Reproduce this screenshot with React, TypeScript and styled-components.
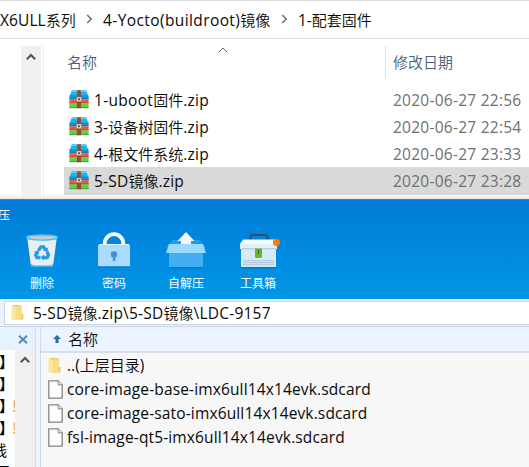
import React from 'react';
import styled, { createGlobalStyle } from 'styled-components';

const GlobalStyle = createGlobalStyle`
  * { box-sizing: border-box; }
  html, body { margin: 0; padding: 0; overflow: hidden; background: #fff; }
  svg { display: block; flex: none; }
`;

const Screen = styled.div`
  width: 529px;
  height: 467px;
  overflow: hidden;
  display: flex;
  flex-direction: column;
  background: #fff;
  font-family: "Open Sans", "Noto Sans CJK SC", sans-serif;
  font-size: 15.5px;
  color: #0a0a0a;
`;

/* Latin and CJK runs are sized separately so both share the same optical height. */
const Line = styled.span<{ $ls?: number }>`
  display: flex;
  align-items: baseline;
  height: 20px;
  line-height: 20px;
  white-space: pre;
  letter-spacing: ${(p) => p.$ls ?? 0}px;
`;
const Cjk = styled.span`
  font-family: "Noto Sans CJK SC", sans-serif;
  font-size: 15px;
  font-weight: 350;
  letter-spacing: 0;
`;

function Text({ children, ls }: { children: string; ls?: number }) {
  const runs = children.split(/([\u3000-\u9fff]+)/).filter(Boolean);
  return (
    <Line $ls={ls}>
      {runs.map((r, i) => (/[\u3000-\u9fff]/.test(r) ? <Cjk key={i}>{r}</Cjk> : <span key={i}>{r}</span>))}
    </Line>
  );
}

const Breadcrumb = styled.nav`
  height: 39px;
  flex: none;
  display: flex;
  align-items: center;
  border-top: 1px solid #d9d9d9;
  border-bottom: 1px solid #d9d9d9;
`;
const Crumb = styled.div<{ $w: number }>`
  width: ${(p) => p.$w}px;
  flex: none;
`;
const Separator = styled.div<{ $w: number }>`
  width: ${(p) => p.$w}px;
  padding: 0 0 2px 10px;
`;

const Explorer = styled.section`
  height: 160px;
  flex: none;
  display: flex;
  overflow: hidden;
  position: relative;
`;
const ExplorerScroll = styled.div`
  width: 20px;
  margin: 7px 2px 0 21px;
  padding: 7px 0 0 5px;
  background: #f0f0f0;
`;
const Files = styled.div`
  flex: 1;
  border-left: 1px solid #f0f0f0;
  margin-top: 7px;
`;
const FileHeader = styled.div`
  height: 40px;
  padding-left: 23px;
  display: flex;
  color: #4c607a;
`;
const NameHeader = styled.div`
  width: 319px;
  height: 32px;
  padding-top: 6px;
  display: flex;
  border-right: 1px solid #e2e2e2;
`;
const SortMark = styled.div`
  margin: -5px 0 0 121px;
`;
const DateHeader = styled.div`
  padding: 6px 0 0 7px;
`;
const FileRow = styled.div<{ $selected?: boolean }>`
  height: ${(p) => (p.$selected ? 28 : 27)}px;
  margin-left: 20px;
  padding: 0 0 1px 5px;
  display: flex;
  align-items: center;
  background: ${(p) => (p.$selected ? '#d9d9d9' : 'transparent')};
`;
const FileName = styled.div`
  width: 299px;
  margin-left: 5px;
  padding-top: 1px;
`;
const FileDate = styled.div`
  color: #707070;
  padding-top: 1px;
`;
const WindowShadow = styled.div`
  position: absolute;
  inset: auto 0 0 0;
  height: 4px;
  background: linear-gradient(rgba(246, 246, 246, 0.8), rgba(226, 226, 226, 0.8));
`;

const Toolbar = styled.section`
  height: 100px;
  flex: none;
  border-top: 1px solid #0b95dc;
  background: linear-gradient(#007bd6, #0097e8);
  color: #fff;
`;
const MenuTail = styled.div`
  height: 32px;
  padding-top: 5px;
  margin-left: -2px;
  font: 12px/20px "Noto Sans CJK SC", sans-serif;
`;
const Tools = styled.div`
  display: flex;
  padding-left: 6px;
`;
const Tool = styled.div`
  width: 72px;
  display: flex;
  flex-direction: column;
  align-items: center;
  font: 12px/18px "Noto Sans CJK SC", sans-serif;
`;
const ToolLabel = styled.span`
  margin-top: 2px;
`;

const AddressBar = styled.div`
  height: 28px;
  flex: none;
  padding: 2px 0 2px 4px;
  background: #e8f3fd;
  border-bottom: 1px solid #ccd6e2;
`;
const AddressField = styled.div`
  height: 24px;
  display: flex;
  align-items: center;
  gap: 9px;
  padding: 0 0 1px 6px;
  background: #fff;
  border: 1px solid #c9d5e5;
  border-right: 0;
`;

const Archive = styled.section`
  flex: 1;
  display: flex;
  min-height: 0;
`;
const TreePane = styled.aside`
  width: 35px;
  display: flex;
  flex-direction: column;
`;
const TreeHeader = styled.div`
  height: 23px;
  flex: none;
  padding: 8px 0 0 18px;
  background: #e6f2fe;
`;
const TreeBody = styled.div`
  flex: 1;
  display: flex;
  overflow: hidden;
`;
const TreeList = styled.div`
  width: 15px;
  padding-top: 1px;
  overflow: hidden;
`;
const TreeRow = styled.div<{ $shift: number; $bold?: boolean }>`
  height: 22px;
  display: flex;
  align-items: center;
  margin-left: ${(p) => p.$shift}px;
  font: ${(p) => (p.$bold ? 700 : 400)} 15px/22px "Noto Sans CJK SC", sans-serif;
  white-space: nowrap;
`;
const Warn = styled.span`
  color: #e5a93a;
  font-weight: 400;
  margin-left: -2px;
`;
const TreeScroll = styled.div`
  flex: 1;
  padding: 6px 0 0 5px;
  background: #f0f0f0;
`;
const Splitter = styled.div`
  width: 6px;
  background: #edf5fe;
  border-left: 1px solid #d5dee8;
  border-right: 1px solid #d0dae4;
`;
const Listing = styled.div`
  flex: 1;
  background: #f7f7f7;
`;
const ListHeader = styled.div`
  height: 26px;
  display: flex;
  align-items: center;
  gap: 7px;
  padding-left: 12px;
  background: #ecf5ff;
  border-bottom: 2px solid #d6e0ea;
`;
const Entry = styled.div`
  height: 24px;
  display: flex;
  align-items: center;
`;
const EntryIcon = styled.div`
  width: 26px;
  padding-left: 7px;
`;

const Chevron = () => (
  <svg width="7" height="10" viewBox="0 0 7 10">
    <path d="M1.2 1 L5.2 5 L1.2 9" fill="none" stroke="#777" strokeWidth="1.7" />
  </svg>
);
const ScrollUp = () => (
  <svg width="10" height="8" viewBox="0 0 10 8">
    <path d="M.8 6.3 L5 2 L9.2 6.3" fill="none" stroke="#555" strokeWidth="2.1" />
  </svg>
);
const ArchiveIcon = () => (
  <svg width="20" height="19" viewBox="0 0 20 19">
    <path d="M3 .2h14l2.600 6.300H.4z" fill="#1fb2ec" />
    <path d="M3 .2h14l.8 1.800H2.200z" fill="#59d0f5" />
    <path d="M.4 5.500h19.200v3.700H.4z" fill="#1490d0" />
    <path d="M.4 8.500h19.200v.8H.4z" fill="#0a6da6" />
    <path d="M.4 9.300h19.200v4H.4z" fill="#e95a3a" />
    <path d="M.4 12.500h19.200v.9H.4z" fill="#b8402c" />
    <path d="M.4 13.400h19.200v4.700H.4z" fill="#61cf47" />
    <path d="M.4 17.200h19.200v.9H.4z" fill="#38a233" />
    <path d="M8.200.2h3.600l.4 18h-4.400z" fill="#984d28" />
    <rect x="7.600" y="7" width="4.800" height="4.400" rx="1" fill="#d9cfc4" />
    <rect x="9" y="8.300" width="2" height="1.800" fill="#715043" />
  </svg>
);
const FolderIcon = () => (
  <svg width="13" height="17" viewBox="0 0 13 17">
    <path d="M2 1h8.5v9h1.8v5.5H2z" fill="#efc65c" />
    <path d="M4.5 2.5 10.5 1v14l-6 .5z" fill="#f8dc86" />
    <path d="M.5 1.2 4.8 3v13.6L.5 15z" fill="#fbe6a2" />
  </svg>
);
const PageIcon = () => (
  <svg width="15" height="19" viewBox="0 0 15 19">
    <path d="M.8.8h9.4l4 4v13.4H.8z" fill="#fdfdfd" stroke="#858585" strokeWidth="1.3" />
    <path d="M10.2.8v4h4" fill="#eee" stroke="#858585" />
  </svg>
);
const TrashIcon = () => (
  <svg width="34" height="40" viewBox="0 1 34 40">
    <path d="M2 5h30l-3.7 28.5Q28 36 25 36H9Q6 36 5.700 33.500z" fill="#e9eef2" />
    <path d="M5.500 32Q6 36 9 36h16q3 0 3.500-4Q27 34.500 24 34.500H10Q7 34.500 5.500 32z" fill="#39b3ee" />
    <ellipse cx="17" cy="6.500" rx="15.500" ry="2.600" fill="#bccbd5" stroke="#3cc0f6" strokeWidth="1.400" />
    <g fill="none" stroke="#259de0" strokeWidth="3.300">
      <path d="M13.500 19.500 16 15.800h2.500l2 3" />
      <path d="M22 20.500l1.500 3.500-1.300 2.500H18" />
      <path d="M15.500 26.500h-3.600l-1.300-2.500 1.500-2.500" />
    </g>
    <g fill="#259de0">
      <path d="M18 19.500l4.800-3v4.500z" />
      <path d="M19 23.500v6l-3.500-3z" />
      <path d="M9 21l4.500-2 .5 4.500z" />
    </g>
  </svg>
);
const LockIcon = () => (
  <svg width="34" height="40" viewBox="0 0 34 40">
    <path d="M7.800 14v-2.700a9.200 9.200 0 0 1 18.400 0v2.700" fill="none" stroke="#fff" strokeWidth="3.800" />
    <path d="M2 12h30v2H2z" fill="#e3f4ff" />
    <path d="M1 13h32v21.500H1z" fill="#a9dcff" />
    <path d="M1 34.500h32v1H1z" fill="#0874bb" />
    <circle cx="17" cy="22.500" r="3.200" fill="#458fd8" />
    <path d="M15.900 23.500h2.400V29h-2.400z" fill="#458fd8" />
  </svg>
);
const ExtractIcon = () => (
  <svg width="44" height="40" viewBox="0 2 44 40">
    <path d="M8 10h28l6 8-4-.5V17H6l-4 1z" fill="#249be5" />
    <path d="M22 2 30.500 11H27v4H17v-4h-3.500z" fill="#f0f8ff" />
    <path d="M5 22h34v15H5z" fill="#43aef3" />
    <path d="M5 14h34l3 9H2z" fill="#9bdaff" />
    <path d="M5 37h34v1.200H5z" fill="#0874bb" />
  </svg>
);
const ToolboxIcon = () => (
  <svg width="38" height="40" viewBox="0 2 38 40" overflow="visible">
    <path d="M11.500 11V7q0-2 2-2h13q2 0 2 2v4" fill="none" stroke="#3e4c5e" strokeWidth="2.200" />
    <path d="M4 9.500h31.500L38 14v4.500H1V14z" fill="#f4fafc" />
    <path d="M1 14h37v5H1z" fill="#e2eff6" />
    <path d="M2 19h35v18H2z" fill="#d9eaf7" />
    <path d="M2 18.300h35v1H2zM4 30.300h31v1H4zM4 32.300h31v1H4zM4 34.300h31v1H4z" fill="#a9c5d8" />
    <path d="M2 37h35v1.200H2z" fill="#0874bb" />
    <path d="M16 18.500h7V27l-1 1h-5l-1-1z" fill="#65b52f" />
    <path d="M19 20h1v4h-1z" fill="#2f6c1d" />
    <circle cx="37.400" cy="12.500" r="3.500" fill="#ff7b09" />
  </svg>
);

const files = [
  { name: '1-uboot固件.zip', date: '2020-06-27 22:56', ls: 0.3 },
  { name: '3-设备树固件.zip', date: '2020-06-27 22:54', ls: 0.2 },
  { name: '4-根文件系统.zip', date: '2020-06-27 23:33', ls: 0.2 },
  { name: '5-SD镜像.zip', date: '2020-06-27 23:28', selected: true, ls: 0.2 },
];
const tools = [
  { label: '删除', icon: <TrashIcon /> },
  { label: '密码', icon: <LockIcon /> },
  { label: '自解压', icon: <ExtractIcon /> },
  { label: '工具箱', icon: <ToolboxIcon /> },
];
const entries = [
  'core-image-base-imx6ull14x14evk.sdcard',
  'core-image-sato-imx6ull14x14evk.sdcard',
  'fsl-image-qt5-imx6ull14x14evk.sdcard',
];
const tree = [
  { text: '】', shift: -1, bold: true },
  { text: '】', shift: -1, bold: true },
  { text: '】', shift: -1, bold: true, warn: true },
  { text: '】', shift: -1, bold: true, warn: true },
  { text: '线', shift: -8 },
  { text: '回', shift: -5 },
];

export default function App() {
  return (
    <Screen>
      <GlobalStyle />
      <Breadcrumb>
        <Crumb $w={76}><Text ls={0.1}>X6ULL系列</Text></Crumb>
        <Separator $w={27}><Chevron /></Separator>
        <Crumb $w={168}><Text ls={0.4}>4-Yocto(buildroot)镜像</Text></Crumb>
        <Separator $w={27}><Chevron /></Separator>
        <Crumb $w={80}><Text>1-配套固件</Text></Crumb>
      </Breadcrumb>
      <Explorer>
        <ExplorerScroll><ScrollUp /></ExplorerScroll>
        <Files>
          <FileHeader>
            <NameHeader>
              <Text>名称</Text>
              <SortMark>
                <svg width="10" height="6" viewBox="0 0 10 6">
                  <path d="M.7 5.300 5 1l4.300 4.300" fill="none" stroke="#666" />
                </svg>
              </SortMark>
            </NameHeader>
            <DateHeader><Text>修改日期</Text></DateHeader>
          </FileHeader>
          {files.map((f) => (
            <FileRow key={f.name} $selected={f.selected}>
              <ArchiveIcon />
              <FileName><Text ls={f.ls}>{f.name}</Text></FileName>
              <FileDate><Text ls={0.25}>{f.date}</Text></FileDate>
            </FileRow>
          ))}
          <FileRow><ArchiveIcon /></FileRow>
        </Files>
        <WindowShadow />
      </Explorer>
      <Toolbar>
        <MenuTail>压</MenuTail>
        <Tools>
          {tools.map((t) => (
            <Tool key={t.label}>
              {t.icon}
              <ToolLabel>{t.label}</ToolLabel>
            </Tool>
          ))}
        </Tools>
      </Toolbar>
      <AddressBar>
        <AddressField>
          <FolderIcon />
          <Text ls={0.22}>{'5-SD镜像.zip\\5-SD镜像\\LDC-9157'}</Text>
        </AddressField>
      </AddressBar>
      <Archive>
        <TreePane>
          <TreeHeader>
            <svg width="10" height="9" viewBox="0 0 10 9">
              <path d="M1 .7l8 7.600M9 .7 1 8.300" stroke="#5f86bd" strokeWidth="2" />
            </svg>
          </TreeHeader>
          <TreeBody>
            <TreeList>
              {tree.map((row, i) => (
                <TreeRow key={i} $shift={row.shift} $bold={row.bold}>
                  {row.text}
                  {row.warn && <Warn>!</Warn>}
                </TreeRow>
              ))}
            </TreeList>
            <TreeScroll><ScrollUp /></TreeScroll>
          </TreeBody>
        </TreePane>
        <Splitter />
        <Listing>
          <ListHeader>
            <svg width="8" height="8" viewBox="0 0 8 8">
              <path d="M4 0l4 4H5.500v4h-3V4H0z" fill="#24719f" />
            </svg>
            <Text>名称</Text>
          </ListHeader>
          <Entry>
            <EntryIcon><FolderIcon /></EntryIcon>
            <Text>..(上层目录)</Text>
          </Entry>
          {entries.map((e) => (
            <Entry key={e}>
              <EntryIcon><PageIcon /></EntryIcon>
              <Text ls={0.14}>{e}</Text>
            </Entry>
          ))}
        </Listing>
      </Archive>
    </Screen>
  );
}
